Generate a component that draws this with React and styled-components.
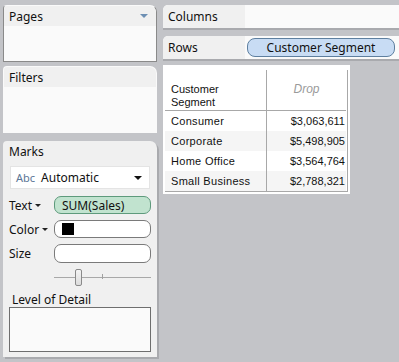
import React from "react";
import styled, { createGlobalStyle } from "styled-components";

const Global = createGlobalStyle`
  html, body { margin: 0; padding: 0; background: #c3c4c8; }
  body { width: 399px; height: 362px; overflow: hidden; font-family: "Noto Sans", "Open Sans", sans-serif; }
`;

const Page = styled.div`
  display: flex;
  gap: 6px;
  padding: 5px 0 0 3px;
  height: 362px;
  box-sizing: border-box;
`;

const LeftCol = styled.div`
  width: 154px;
  display: flex;
  flex-direction: column;
`;

const Panel = styled.div`
  background: #fafafa;
  border-radius: 4px 7px 0 0;
  height: ${(p) => p.$h}px;
  margin-bottom: ${(p) => p.$mb || 0}px;
  box-sizing: border-box;
  border: 1px solid ${(p) => (p.$bordered ? "#8a8a8a" : "transparent")};
  border-top-color: transparent;
  display: flex;
  flex-direction: column;
  overflow: hidden;
`;

const PanelHead = styled.div`
  height: 20px;
  background: #f0f0f0;
  display: flex;
  align-items: center;
  justify-content: space-between;
  padding: 0 8px 0 5px;
  font-size: 12px;
  color: #111;
`;

const Caret = styled.span`
  width: 0;
  height: 0;
  border-left: 4px solid transparent;
  border-right: 4px solid transparent;
  border-top: 4px solid ${(p) => p.$c || "#6d8fb3"};
`;

const Marks = styled.div`
  background: #f0f0f0;
  border-radius: 4px 7px 0 0;
  height: 216px;
  padding: 1px 6px 0 6px;
  box-sizing: border-box;
  box-shadow: 2px 2px 0 #a9aaae;
  display: flex;
  flex-direction: column;
  font-size: 12px;
  color: #111;
`;

const MarksTitle = styled.div`
  height: 18px;
  display: flex;
  align-items: center;
`;

const Dropdown = styled.div`
  margin: 6px 1px 0 1px;
  height: 23px;
  background: #fff;
  border: 1px solid #e4e4e4;
  display: flex;
  align-items: center;
  padding: 0 7px 0 5px;
  box-sizing: border-box;
  gap: 6px;
`;

const Abc = styled.span`
  color: #5b7595;
  font-size: 11px;
`;

const Grow = styled.span`
  flex: 1;
`;

const PropRow = styled.div`
  display: flex;
  align-items: center;
  height: ${(p) => p.$h || 18}px;
  margin-top: ${(p) => p.$mt || 0}px;
`;

const PropLabel = styled.div`
  width: 45px;
  display: flex;
  align-items: center;
  gap: 3px;
`;

const SmallCaret = styled.span`
  width: 0;
  height: 0;
  border-left: 3px solid transparent;
  border-right: 3px solid transparent;
  border-top: 3px solid #222;
  margin-top: 1px;
`;

const Field = styled.div`
  flex: 1;
  height: 100%;
  box-sizing: border-box;
  border-radius: 7px;
  border: 1px solid ${(p) => (p.$green ? "#5e9a7c" : "#7a7a7a")};
  background: ${(p) => (p.$green ? "#c1e3cf" : "#fff")};
  display: flex;
  align-items: center;
  padding-left: 7px;
  font-size: 12px;
`;

const Swatch = styled.span`
  width: 12px;
  height: 12px;
  background: #000;
`;

const SliderRow = styled.div`
  margin-left: 45px;
  height: 17px;
  margin-top: 6px;
  position: relative;
`;

const Track = styled.div`
  position: absolute;
  left: 0;
  right: 0;
  top: 8px;
  height: 1px;
  background: #a8a8a8;
`;

const Tick = styled.div`
  position: absolute;
  left: 48px;
  top: 5px;
  width: 1px;
  height: 5px;
  background: #a0a0a0;
`;

const Thumb = styled.div`
  position: absolute;
  left: 21px;
  top: 0;
  width: 5px;
  height: 15px;
  border: 1px solid #8a8a8a;
  border-radius: 2px;
  background: linear-gradient(#f4f4f4, #dcdcdc);
`;

const LodLabel = styled.div`
  margin-top: 5px;
  padding-left: 3px;
  height: 16px;
  display: flex;
  align-items: center;
`;

const LodBox = styled.div`
  height: 45px;
  border: 1px solid #6e6e6e;
  background: #fafafa;
  box-sizing: border-box;
`;

const RightCol = styled.div`
  flex: 1;
  display: flex;
  flex-direction: column;
`;

const Shelf = styled.div`
  height: 23px;
  display: flex;
  border-radius: 5px 0 0 0;
  overflow: hidden;
  box-shadow: 0 2px 0 #a9aaae;
  margin-bottom: ${(p) => p.$mb || 0}px;
  background: #fafafa;
`;

const ShelfLabel = styled.div`
  width: 77px;
  background: #f0f0f0;
  display: flex;
  align-items: center;
  padding-left: 5px;
  font-size: 12px;
  color: #111;
`;

const ShelfBody = styled.div`
  flex: 1;
  display: flex;
  align-items: center;
  padding-left: 2px;
`;

const Pill = styled.div`
  width: 148px;
  height: 19px;
  box-sizing: border-box;
  border: 1px solid #5e7f9f;
  border-radius: 8px;
  background: #c8dcf4;
  display: flex;
  align-items: center;
  justify-content: center;
  font-size: 12px;
  color: #111;
`;

const Sheet = styled.div`
  margin-top: 6px;
  width: 187px;
  background: #fff;
  padding: 5px 2px 2px 2px;
  box-sizing: border-box;
`;

const Table = styled.div`
  display: grid;
  grid-template-columns: 102px 79px;
  border-right: 1px solid #a8a8a8;
  border-bottom: 1px solid #a8a8a8;
  font-family: "Liberation Sans", Arial, sans-serif;
  font-size: 11px;
  color: #111;
`;

const HeadCell = styled.div`
  height: 41px;
  box-sizing: border-box;
  border-bottom: 1px solid #a8a8a8;
  border-right: ${(p) => (p.$line ? "1px solid #a8a8a8" : "none")};
  display: flex;
  align-items: ${(p) => (p.$center ? "flex-start" : "flex-end")};
  justify-content: ${(p) => (p.$center ? "center" : "flex-start")};
  padding: ${(p) => (p.$center ? "13px 0 0 0" : "0 0 1px 6px")};
  line-height: 13px;
  color: ${(p) => (p.$drop ? "#9a9a9a" : "#111")};
  font-style: ${(p) => (p.$drop ? "italic" : "normal")};
  font-size: ${(p) => (p.$drop ? "12px" : "11px")};
`;

const Cell = styled.div`
  height: 20px;
  box-sizing: border-box;
  background: ${(p) => (p.$alt ? "#f5f5f5" : "#fff")};
  border-right: ${(p) => (p.$line ? "1px solid #a8a8a8" : "none")};
  display: flex;
  align-items: center;
  justify-content: ${(p) => (p.$num ? "flex-end" : "flex-start")};
  padding: ${(p) => (p.$num ? "0 1px 0 0" : "0 0 0 6px")};
  letter-spacing: ${(p) => (p.$num ? "0" : "0.3px")};
`;

const rows = [
  ["Consumer", "$3,063,611"],
  ["Corporate", "$5,498,905"],
  ["Home Office", "$3,564,764"],
  ["Small Business", "$2,788,321"],
];

export default function App() {
  return (
    <>
      <Global />
      <Page>
        <LeftCol>
          <Panel $h={57} $mb={4} $bordered>
            <PanelHead>
              <span>Pages</span>
              <Caret />
            </PanelHead>
          </Panel>
          <Panel $h={67} $mb={8}>
            <PanelHead>
              <span>Filters</span>
            </PanelHead>
          </Panel>
          <Marks>
            <MarksTitle>Marks</MarksTitle>
            <Dropdown>
              <Abc>Abc</Abc>
              <Grow>Automatic</Grow>
              <Caret $c="#111" />
            </Dropdown>
            <PropRow $mt={7}>
              <PropLabel>
                Text <SmallCaret />
              </PropLabel>
              <Field $green>SUM(Sales)</Field>
            </PropRow>
            <PropRow $mt={6}>
              <PropLabel>
                Color <SmallCaret />
              </PropLabel>
              <Field>
                <Swatch />
              </Field>
            </PropRow>
            <PropRow $mt={6} $h={19}>
              <PropLabel>Size</PropLabel>
              <Field />
            </PropRow>
            <SliderRow>
              <Track />
              <Tick />
              <Thumb />
            </SliderRow>
            <LodLabel>Level of Detail</LodLabel>
            <LodBox />
          </Marks>
        </LeftCol>
        <RightCol>
          <Shelf $mb={8}>
            <ShelfLabel>Columns</ShelfLabel>
            <ShelfBody />
          </Shelf>
          <Shelf>
            <ShelfLabel>Rows</ShelfLabel>
            <ShelfBody>
              <Pill>Customer Segment</Pill>
            </ShelfBody>
          </Shelf>
          <Sheet>
            <Table>
              <HeadCell $line>
                Customer
                <br />
                Segment
              </HeadCell>
              <HeadCell $center $drop>
                Drop
              </HeadCell>
              {rows.map(([k, v], i) => (
                <React.Fragment key={k}>
                  <Cell $line $alt={i % 2 === 1}>
                    {k}
                  </Cell>
                  <Cell $num $alt={i % 2 === 1}>
                    {v}
                  </Cell>
                </React.Fragment>
              ))}
            </Table>
          </Sheet>
        </RightCol>
      </Page>
    </>
  );
}
